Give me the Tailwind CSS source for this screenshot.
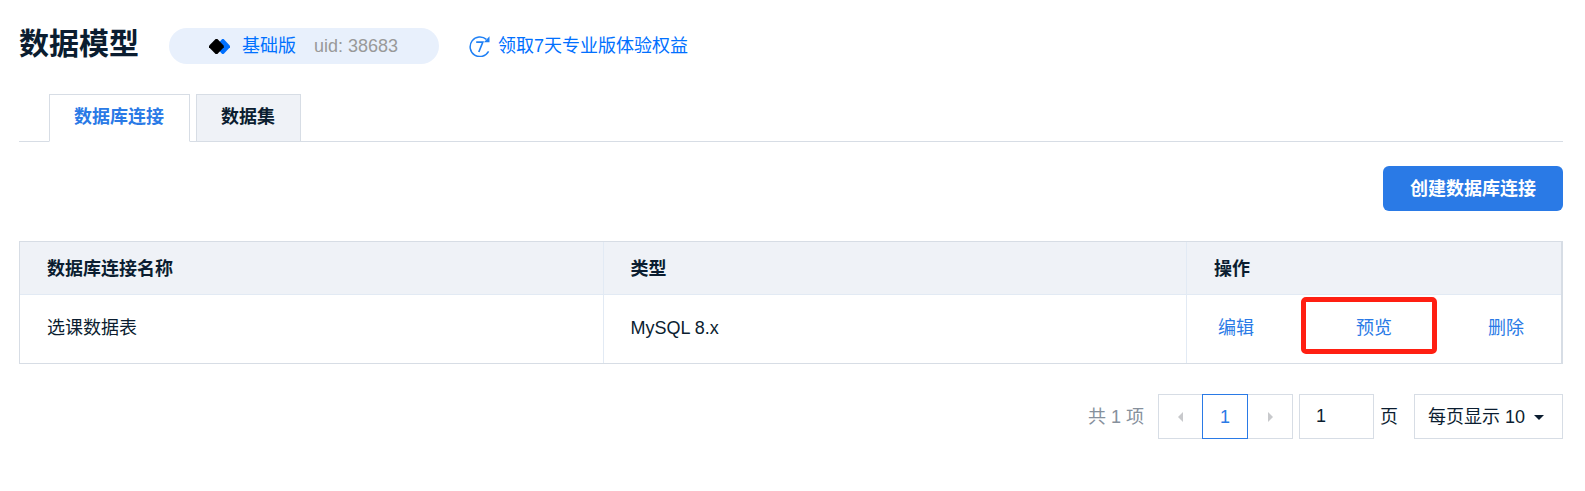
<!DOCTYPE html>
<html lang="zh-CN">
<head>
<meta charset="utf-8">
<meta name="viewport" content="width=device-width, initial-scale=1">
<title>数据模型</title>
<script src="https://cdn.jsdelivr.net/npm/@tailwindcss/browser@4"></script>
</head>
<body class="bg-white pl-[19px] pr-[22px] pt-5 pb-12 font-['Liberation_Sans','Noto_Sans_CJK_SC',sans-serif] text-lg font-normal leading-6 text-[#0b1d30]">
  <header class="flex items-center">
    <h1 class="mr-[30px] text-[30px] font-bold leading-[48px]">数据模型</h1>
    <div class="mr-[30px] mt-1 flex h-9 items-center rounded-full bg-[#e8f0fc] pl-10 pr-[41px]">
      <svg class="mr-3 h-[15px] w-[21px]" viewBox="0 0 21 15" aria-hidden="true">
        <path d="M13.2 0h1.4L21 6.7v1.6L14.6 15h-1.4L7 8.3V6.7z" fill="#0070ff"/>
        <path d="M6.6 0h1.8l6.4 6.7v1.6L8.4 15H6.6L0 8.3V6.7z" fill="#000"/>
      </svg>
      <span class="mr-[18px] text-[#0070ff]">基础版</span>
      <span class="text-[#999999]">uid: 38683</span>
    </div>
    <a href="#" class="mt-1 flex items-center gap-2 text-[#0070ff]">
      <svg class="size-[21px]" viewBox="0 0 21 21" fill="none" stroke="#1f80f5" aria-hidden="true">
        <path d="M19.6 15.4A9.8 9.8 0 1 1 17.4 3.4" stroke-width="1.5"/>
        <path d="M20.5 .3v6h-5.6z" fill="#1f80f5" stroke="none"/>
        <path d="M7.2 6.2h6.6L9.8 16" stroke-width="1.7"/>
      </svg>
      <span>领取7天专业版体验权益</span>
    </a>
  </header>

  <nav class="mt-[26px] flex gap-[6px] border-b border-[#d7dde5] pl-[30px]" role="tablist">
    <button type="button" role="tab" aria-selected="true" class="-mb-px h-12 border border-[#d7dde5] border-b-white bg-white pb-[3px] pl-6 pr-[25px] font-bold text-[#2a7ae6]">数据库连接</button>
    <button type="button" role="tab" aria-selected="false" class="h-[47px] border border-b-0 border-[#d7dde5] bg-[#eff2f7] pb-[3px] pl-6 pr-[25px] font-bold">数据集</button>
  </nav>

  <div class="mt-6 flex justify-end">
    <button type="button" class="h-[45px] w-[180px] rounded-md bg-[#2a7ae6] font-bold text-white">创建数据库连接</button>
  </div>

  <table class="mt-[30px] w-full table-fixed border-separate border-spacing-0 border border-r-2 border-[#d7dde5] text-left">
    <colgroup><col><col><col class="w-[374px]"></colgroup>
    <thead>
      <tr class="h-[53px] bg-[#eff2f7]">
        <th scope="col" class="border-b border-r border-[#e2eaf4] pl-[27px] pt-px font-bold">数据库连接名称</th>
        <th scope="col" class="border-b border-r border-[#e2eaf4] pl-[27px] pt-px font-bold">类型</th>
        <th scope="col" class="border-b border-[#e2eaf4] pl-[27px] pt-px font-bold">操作</th>
      </tr>
    </thead>
    <tbody>
      <tr class="h-[68px]">
        <td class="border-r border-[#e2eaf4] pb-[2px] pl-[27px]">选课数据表</td>
        <td class="border-r border-[#e2eaf4] pb-[2px] pl-[27px]">MySQL 8.x</td>
        <td class="pb-[2px] pl-[31px]">
          <div class="flex text-[#2a7ae6]">
            <a href="#">编辑</a>
            <div class="relative ml-[102px] mr-24">
              <a href="#">预览</a>
              <span class="pointer-events-none absolute -left-[55px] -top-[19px] h-[57px] w-[136px] rounded-[5px] border-5 border-[#ff1f12]"></span>
            </div>
            <a href="#">删除</a>
          </div>
        </td>
      </tr>
    </tbody>
  </table>

  <div class="mt-[30px] flex items-center justify-end">
    <span class="mr-[14px] text-[#86909c]">共 1 项</span>
    <nav class="mr-[6px] flex" aria-label="分页">
      <button type="button" aria-label="上一页" class="flex h-[45px] w-11 items-center justify-center border border-r-0 border-[#d7dde5]">
        <svg class="h-[10px] w-[5px]" viewBox="0 0 5 10" aria-hidden="true"><path d="M5 0v10L0 5z" fill="#c8c9cc"/></svg>
      </button>
      <button type="button" aria-current="page" class="h-[45px] w-[46px] border border-[#2a7ae6] text-[#2a7ae6]">1</button>
      <button type="button" aria-label="下一页" class="flex h-[45px] w-[45px] items-center justify-center border border-l-0 border-[#d7dde5]">
        <svg class="h-[10px] w-[5px]" viewBox="0 0 5 10" aria-hidden="true"><path d="M0 0v10l5-5z" fill="#c8c9cc"/></svg>
      </button>
    </nav>
    <label class="mr-4 flex items-center gap-[6px]">
      <input type="text" value="1" aria-label="页码" class="h-[45px] w-[75px] border border-[#d7dde5] pl-4">
      <span>页</span>
    </label>
    <div class="relative">
      <select aria-label="每页显示" class="h-[45px] w-[149px] appearance-none border border-[#d7dde5] bg-white pl-[13px]">
        <option>每页显示 10</option>
        <option>每页显示 20</option>
      </select>
      <svg class="pointer-events-none absolute right-[19px] top-[21px] h-[5px] w-[10px]" viewBox="0 0 10 5" aria-hidden="true"><path d="M0 0h10L5 5z" fill="#0b1d30"/></svg>
    </div>
  </div>
</body>
</html>
